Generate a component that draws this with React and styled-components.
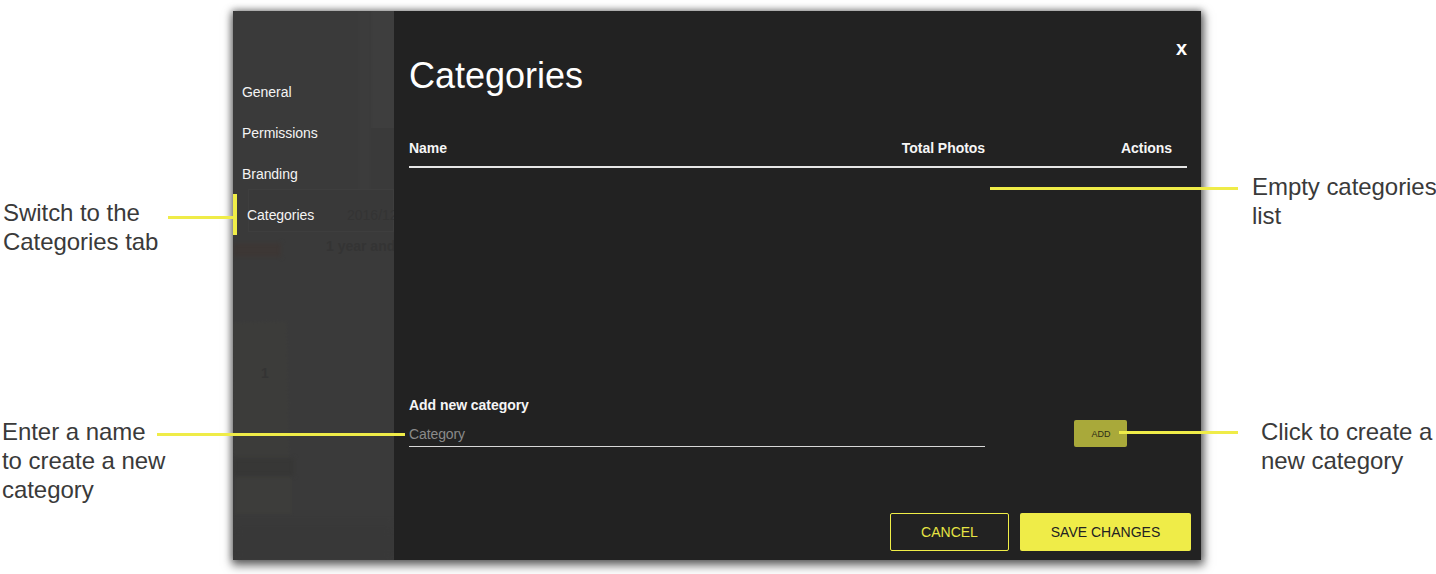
import React from "react";
import styled, { createGlobalStyle } from "styled-components";

const Global = createGlobalStyle`
  html, body { margin: 0; padding: 0; background: #fff; }
  body { font-family: "Liberation Sans", Arial, sans-serif; }
  * { box-sizing: border-box; }
`;

const Page = styled.div`
  position: relative;
  width: 1436px;
  height: 574px;
  overflow: hidden;
  padding: 11px 0 0 233px;
  background: #fff;
`;

const Modal = styled.div`
  width: 968px;
  height: 549px;
  display: flex;
  background: #222;
  box-shadow: 0 0 7px 1px rgba(0, 0, 0, 0.35), 1px 4px 9px 2px rgba(0, 0, 0, 0.5);
`;

const Sidebar = styled.nav`
  position: relative;
  width: 161px;
  flex: none;
  padding-top: 60px;
  background: #3a3a3a;
  overflow: hidden;
`;

const Ghost = styled.div`
  position: absolute;
  left: ${(p) => p.$x}px;
  top: ${(p) => p.$y}px;
  width: ${(p) => p.$w}px;
  height: ${(p) => p.$h}px;
  background: ${(p) => p.$bg};
  border: ${(p) => p.$border || "none"};
  filter: blur(${(p) => p.$blur ?? 1}px);
  transform: rotate(${(p) => p.$rot || 0}deg);
`;

const GhostText = styled.div`
  position: absolute;
  left: ${(p) => p.$x}px;
  top: ${(p) => p.$y}px;
  font-size: 14px;
  font-weight: ${(p) => p.$weight};
  color: #343434;
  white-space: nowrap;
`;

const NavItem = styled.div`
  position: relative;
  height: 41px;
  display: flex;
  align-items: center;
  padding-left: ${(p) => (p.$active ? 10 : 9)}px;
  border-left: ${(p) => (p.$active ? "4px solid #f0ee47" : "none")};
  font-size: 14px;
  letter-spacing: -0.05px;
  color: #f4f4f4;
`;

const Main = styled.main`
  position: relative;
  flex: 1;
  padding: 45px 14px 0 15px;
  display: flex;
  flex-direction: column;
`;

const Close = styled.button`
  position: absolute;
  top: 27px;
  right: 14px;
  padding: 0;
  border: none;
  background: none;
  font: 700 20px/20px "Liberation Sans", sans-serif;
  color: #fff;
`;

const Title = styled.h1`
  margin: 0;
  font-size: 36px;
  line-height: 40px;
  font-weight: 400;
  color: #fff;
`;

const TableHead = styled.div`
  margin-top: 39px;
  height: 33px;
  display: grid;
  grid-template-columns: 576px 1fr;
  align-items: center;
  border-bottom: 2px solid #e6e6e6;
  padding-bottom: 6px;
  font-size: 14px;
  letter-spacing: -0.05px;
  font-weight: 700;
  color: #f6f6f6;
`;

const HeadName = styled.div`
  display: flex;
  justify-content: space-between;
`;

const HeadActions = styled.div`
  text-align: right;
  padding-right: 15px;
`;

const ListArea = styled.div`
  height: 229px;
`;

const AddLabel = styled.div`
  font-size: 14px;
  letter-spacing: -0.05px;
  line-height: 16px;
  font-weight: 700;
  color: #f6f6f6;
`;

const AddRow = styled.div`
  margin-top: 7px;
  display: flex;
  align-items: flex-end;
`;

const Input = styled.div`
  width: 576px;
  height: 27px;
  display: flex;
  align-items: center;
  padding-top: 2px;
  border-bottom: 1px solid #d8d8d8;
  font-size: 14px;
  letter-spacing: -0.1px;
  color: #8a8a8a;
`;

const AddButton = styled.button`
  margin-left: 89px;
  width: 53px;
  height: 27px;
  padding: 0 0 0 1px;
  border: none;
  border-radius: 2px;
  background: #a9a93a;
  font: 400 9px "Liberation Sans", sans-serif;
  color: #2c2c16;
`;

const Footer = styled.div`
  margin-top: 66px;
  margin-right: -4px;
  display: flex;
  justify-content: flex-end;
  gap: 11px;
`;

const Cancel = styled.button`
  width: 119px;
  height: 38px;
  border: 1px solid #f0ee47;
  border-radius: 2px;
  background: transparent;
  font: 400 14px "Liberation Sans", sans-serif;
  color: #e6e444;
`;

const Save = styled.button`
  width: 171px;
  height: 38px;
  border: none;
  border-radius: 2px;
  background: #efec48;
  font: 400 14px "Liberation Sans", sans-serif;
  color: #222;
`;

const Leader = styled.div`
  position: absolute;
  left: ${(p) => p.$x}px;
  top: ${(p) => p.$y}px;
  width: ${(p) => p.$w}px;
  height: 3px;
  background: #efec48;
`;

const Note = styled.div`
  position: absolute;
  left: ${(p) => p.$x}px;
  top: ${(p) => p.$y}px;
  font-size: 24px;
  letter-spacing: -0.05px;
  line-height: 29px;
  color: #3a3a3a;
  white-space: pre;
`;

const ghosts = [
  { x: 138, y: 0, w: 23, h: 117, bg: "#3e3e3e", blur: 0 },
  { x: 125, y: 0, w: 13, h: 180, bg: "#3c3c3c", blur: 1 },
  { x: 15, y: 178, w: 146, h: 43, bg: "#393939", border: "1px solid #3e3e3e", blur: 0 },
  { x: 0, y: 232, w: 48, h: 14, bg: "#3d3735", blur: 2 },
  { x: 0, y: 311, w: 55, h: 150, bg: "#3c3c3a", blur: 1, rot: -1 },
  { x: 2, y: 465, w: 57, h: 38, bg: "#3d3d3b", blur: 1 },
  { x: 0, y: 447, w: 61, h: 18, bg: "#373736", blur: 2 },
  { x: 0, y: 515, w: 161, h: 34, bg: "#383838", blur: 4 },
];

const tabs = ["General", "Permissions", "Branding", "Categories"];

export default function App() {
  return (
    <Page>
      <Global />
      <Modal>
        <Sidebar>
          {ghosts.map((g, i) => (
            <Ghost key={i} $x={g.x} $y={g.y} $w={g.w} $h={g.h} $bg={g.bg} $border={g.border} $blur={g.blur} $rot={g.rot} />
          ))}
          <GhostText $x={114} $y={196} $weight={400}>2016/12</GhostText>
          <GhostText $x={93} $y={227} $weight={700}>1 year and</GhostText>
          <GhostText $x={28} $y={354} $weight={700}>1</GhostText>
          {tabs.map((t) => (
            <NavItem key={t} $active={t === "Categories"}>{t}</NavItem>
          ))}
        </Sidebar>
        <Main>
          <Close>x</Close>
          <Title>Categories</Title>
          <TableHead>
            <HeadName>
              <span>Name</span>
              <span>Total Photos</span>
            </HeadName>
            <HeadActions>Actions</HeadActions>
          </TableHead>
          <ListArea />
          <AddLabel>Add new category</AddLabel>
          <AddRow>
            <Input>Category</Input>
            <AddButton>ADD</AddButton>
          </AddRow>
          <Footer>
            <Cancel>CANCEL</Cancel>
            <Save>SAVE CHANGES</Save>
          </Footer>
        </Main>
      </Modal>
      <Leader $x={168} $y={216} $w={65} />
      <Leader $x={157} $y={433} $w={248} />
      <Leader $x={990} $y={187} $w={248} />
      <Leader $x={1119} $y={431} $w={119} />
      <Note $x={3} $y={198}>{"Switch to the\nCategories tab"}</Note>
      <Note $x={2} $y={417}>{"Enter a name\nto create a new\ncategory"}</Note>
      <Note $x={1252} $y={172}>{"Empty categories\nlist"}</Note>
      <Note $x={1261} $y={417}>{"Click to create a\nnew category"}</Note>
    </Page>
  );
}
